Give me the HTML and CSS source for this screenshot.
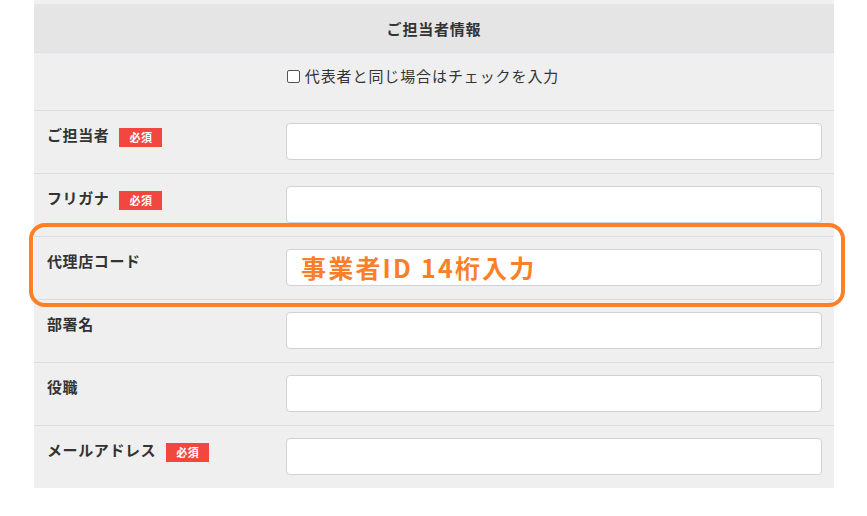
FILE: index.html
```html
<!DOCTYPE html>
<html lang="ja">
<head>
<meta charset="utf-8">
<title>ご担当者情報</title>
<link rel="stylesheet" href="styles.css">
</head>
<body>
<div class="form">
  <div class="prev"></div>
  <div class="head">ご担当者情報</div>
  <div class="check"><label><span class="box"></span>代表者と同じ場合はチェックを入力</label></div>
  <div class="row">
    <div class="label">ご担当者<span class="req">必須</span></div>
    <div class="field"><div class="input"></div></div>
  </div>
  <div class="row">
    <div class="label">フリガナ<span class="req">必須</span></div>
    <div class="field"><div class="input"></div></div>
  </div>
  <div class="row highlight">
    <div class="label">代理店コード</div>
    <div class="field"><div class="input"><span class="note">事業者ID 14桁入力</span></div></div>
    <div class="ring"></div>
  </div>
  <div class="row">
    <div class="label">部署名</div>
    <div class="field"><div class="input"></div></div>
  </div>
  <div class="row">
    <div class="label">役職</div>
    <div class="field"><div class="input"></div></div>
  </div>
  <div class="row last">
    <div class="label">メールアドレス<span class="req">必須</span></div>
    <div class="field"><div class="input"></div></div>
  </div>
</div>
</body>
</html>
```
FILE: styles.css
```css
html, body {
  margin: 0;
  padding: 0;
  background: #ffffff;
}
body {
  font-family: "Noto Sans CJK JP", "Noto Sans", sans-serif;
  color: #333333;
  font-size: 15px;
}
.form {
  margin-left: 34px;
  width: 800px;
  background: #efefef;
}
.prev {
  height: 4px;
  background: #f0f0f0;
}
.head {
  background: #e5e5e5;
  text-align: center;
  font-weight: bold;
  font-size: 15px;
  letter-spacing: 0.8px;
  line-height: 20px;
  padding: 15px 0 13px;
  border-bottom: 1px solid #dfe1e6;
}
.check {
  text-align: center;
  line-height: 20px;
  padding: 13px 22px 23px 0;
  border-bottom: 1px solid #dcdde1;
  font-size: 15px;
  letter-spacing: 0.9px;
}
.check label {
  display: inline-flex;
  align-items: center;
  gap: 5px;
}
.box {
  width: 11px;
  height: 11px;
  border: 1px solid #555555;
  border-radius: 2px;
  background: #ffffff;
  display: inline-block;
}
.row {
  display: flex;
  border-bottom: 1px solid #dcdde1;
  position: relative;
}
.row.last {
  border-bottom: none;
}
.label {
  width: 239px;
  padding: 14px 0 0 13px;
  line-height: 20px;
  font-weight: bold;
  font-size: 15px;
  letter-spacing: 0.6px;
  display: flex;
  align-items: flex-start;
  gap: 10px;
}
.req {
  background: #f2473f;
  color: #ffffff;
  font-size: 11px;
  font-weight: bold;
  letter-spacing: 0.5px;
  width: 43px;
  height: 19px;
  line-height: 19px;
  text-align: center;
  margin-top: 3px;
}
.field {
  flex: 1;
  padding: 12px 12px 13px 0;
}
.input {
  height: 37px;
  box-sizing: border-box;
  border: 1px solid #cfd2d8;
  border-radius: 4px;
  background: #ffffff;
  display: flex;
  align-items: center;
  padding-left: 14px;
}
.note {
  color: #fb7f28;
  font-weight: bold;
  font-size: 25px;
  line-height: 30px;
  letter-spacing: 2.2px;
}
.ring {
  position: absolute;
  left: -5px;
  right: -11px;
  top: -14px;
  bottom: -8px;
  border: 4px solid #fd7f26;
  border-radius: 16px;
  pointer-events: none;
}
```
